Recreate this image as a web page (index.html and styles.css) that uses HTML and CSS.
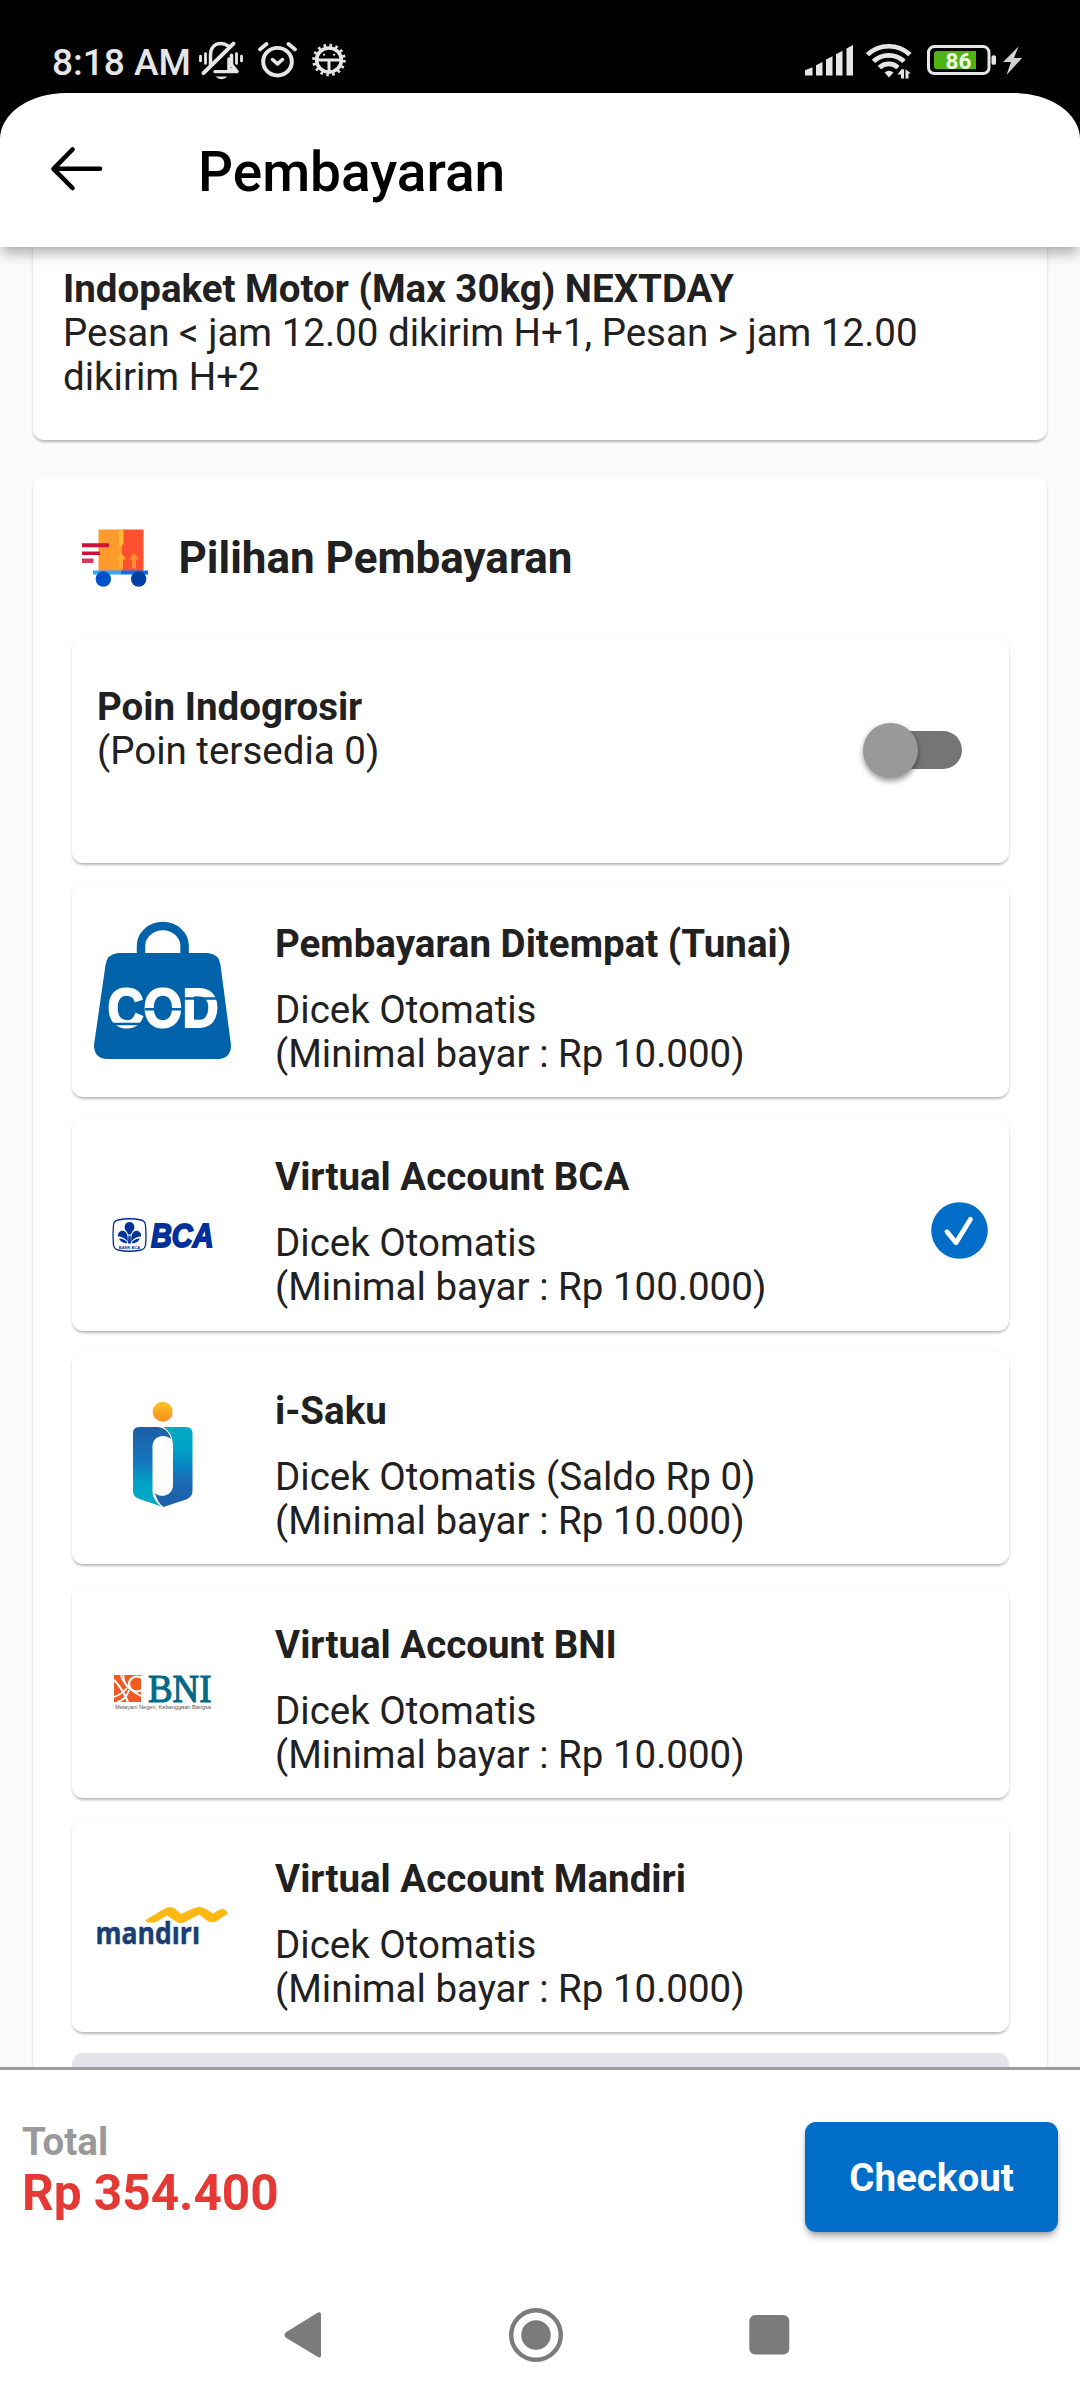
FILE: index.html
```
<!DOCTYPE html>
<html lang="id">
<head>
<meta charset="utf-8">
<title>Pembayaran</title>
<link rel="stylesheet" href="styles.css">
</head>
<body>
<div class="screen">
  <div class="status">
    <span class="clock">8:18 AM</span>
    <svg class="status-left" viewBox="196 38 160 48" fill="none" stroke="#e6e6e6" stroke-linecap="round" stroke-linejoin="round">
      <g transform="scale(1 .968)">
      <path d="M210.500 68V57C210.500 49 215 45 221 45c3 0 5 1 7 2.500" stroke-width="3.500"/>
      <path d="M203.500 75.500L233.500 45" stroke-width="4"/>
      <path d="M231.500 57v10l5.500 7h-22" stroke-width="3.500"/>
      <path d="M229 61v11h5" stroke-width="3.500"/>
      <path d="M215.500 79h12q-6 5.500-12 0z" fill="#e6e6e6" stroke="none"/>
      <path d="M200.500 58v5M205.500 55.500v10M236.500 55.500v10M241.500 58v5" stroke-width="2.800"/>
      <circle cx="277.500" cy="63.700" r="14.300" stroke-width="4"/>
      <path d="M272.500 61.500l5 4.500 5-4.500" stroke-width="3.600"/>
      <path d="M260 51l6.500-5.500M288.500 45.500L295 51" stroke-width="4"/>
      <circle cx="329" cy="62" r="15.300" stroke-width="3" stroke-dasharray="2.600 3.408" stroke-linecap="butt"/>
      <circle cx="329" cy="62" r="12.400" stroke-width="3.600"/>
      <path d="M317 62h24M329 62v13" stroke-width="3"/>
      <path d="M324 56.500h.1M334 56.500h.1" stroke-width="2.200"/>
      </g>
    </svg>
    <svg class="status-right" viewBox="800 38 226 48">
      <g transform="scale(1 .968)">
      <g fill="#e6e6e6">
        <path d="M805 78v-5.500l7.500-3V78zM816 78V67.500l6.500-3.500V78zM826 78V61.500l6.500-3.500V78zM836 78V56l6.500-3.500V78zM846.500 78V50l6.500-3.500V78z"/>
        <path d="M884.500 75q4.500-4 9 0l-4.500 5z"/>
        <path d="M897.500 77l4-5.500h2.500v9.500h-3v-4zM905.500 71.500l5.500 4.500h-2.500v5h-3z"/>
        <rect x="991.500" y="57" width="4.500" height="10" rx="2"/>
      </g>
      <path d="M1018.500 48L1003 64h8l-4.500 13.500L1022 60h-8z" fill="#d2d2d2"/>
      <g fill="none" stroke="#e6e6e6" stroke-width="4.800">
        <path d="M867.500 56.500a30 30 0 0 1 42.400 0M873.500 63.500a21.500 21.500 0 0 1 30.500 0M879.500 69.800a13 13 0 0 1 18.500 0"/>
        <rect x="928.500" y="48" width="60.500" height="28" rx="6" stroke-width="3"/>
      </g>
      <path d="M976 52.700h-39q-3 0-3 3v12.800q0 3 3 3h39z" fill="#4fb314"/>
      <text x="958.500" y="71" class="battery-text" text-anchor="middle">86</text>
      </g>
    </svg>
  </div>

  <header class="appbar">
    <svg class="back" viewBox="50 151 54 50" fill="none" stroke="#000" stroke-width="4.600" stroke-linecap="round" stroke-linejoin="round"><path d="M100 174.800H54M72.500 155.500L53.500 174.800l19 19.200"/></svg>
    <h1>Pembayaran</h1>
  </header>

  <main class="content">
    <section class="card shipping">
      <b>Indopaket Motor (Max 30kg) NEXTDAY</b>
      <p>Pesan &lt; jam 12.00 dikirim H+1, Pesan &gt; jam 12.00 dikirim H+2</p>
    </section>

    <section class="card payments">
      <div class="section-title">
        <svg class="truck" viewBox="82 526 66 64">
          <path d="M98.500 529.500H122v42H98.500z" fill="#ff9a2c"/>
          <path d="M122 529.500h21.500v42H122z" fill="#ff512f"/>
          <path d="M119 529.500h4.500v15l-4.500 3z" fill="#ffbb38"/>
          <path d="M121 552.500l-5 7h3v9h4v-9h3z" fill="#ffae35"/>
          <path d="M134 552.500l-5 7h3v9h4v-9h3z" fill="#ff8f2e"/>
          <path d="M82 543.300h27v4H82zM82 551.500h18v3.500H82z" fill="#cf1238"/>
          <path d="M82 558.500h11.500v4.500H82z" fill="#d83a5a"/>
          <path d="M93 570.500h29v4H93z" fill="#38a5ff"/>
          <path d="M121 570.500h27v4h-27z" fill="#0d6cff"/>
          <circle cx="103.300" cy="579" r="7.700" fill="#0052cc"/>
          <circle cx="138.700" cy="579" r="7.700" fill="#003fa3"/>
        </svg>
        <h2>Pilihan Pembayaran</h2>
      </div>

      <div class="card points">
        <div><b>Poin Indogrosir</b><p>(Poin tersedia 0)</p></div>
        <div class="switch"><i></i></div>
      </div>

      <div class="card option">
        <svg viewBox="72 885 180 212">
          <path d="M141 956v-10a21.800 20 0 0 1 43.600 0v10" fill="none" stroke="#0063a9" stroke-width="8.500"/>
          <path d="M118 953h90q11 1 12.500 12L231 1045q0 13-12 14H106q-12-1-12-14l11.500-80q1.500-11 12.500-12z" fill="#0063a9"/>
          <text x="107.500" y="1027" class="cod" textLength="111" lengthAdjust="spacingAndGlyphs">COD</text>
          <path d="M110 1024h30M145 1009.300h38M185 998.500h34" stroke="#0063a9" stroke-width="2.600"/>
        </svg>
        <div class="info"><b>Pembayaran Ditempat (Tunai)</b><p>Dicek Otomatis<br>(Minimal bayar : Rp 10.000)</p></div>
      </div>

      <div class="card option">
        <svg viewBox="72 1118.500 180 212" fill="#00309a">
          <path d="M118 1219.500q11.500-2.500 23 0 4 1 4.500 5 1 11.500 0 20-.5 4-4.500 5-11.500 2.500-23 0-4-1-4.500-5-1-10 0-20 .5-4 4.500-5z" fill="none" stroke="#00309a" stroke-width="1.300"/>
          <circle cx="129.500" cy="1226.500" r="4.900"/>
          <path d="M124.800 1228l4.700 8 4.700-8zM128.500 1234h2l.5 9h-3z"/>
          <path d="M118 1236c-1-5 5-8 8-4 2 3 2 6 1.500 9.500-1-3-5-5.500-9.500-5.500zM141 1236c1-5-5-8-8-4-2 3-2 6-1.500 9.500 1-3 5-5.500 9.500-5.500zM119 1238q6 0 8.500 4.500-5.500 1-8.500-4.500zM140 1238q-6 0-8.500 4.500 5.500 1 8.500-4.500z"/>
          <text x="129.500" y="1248" class="bca-small" text-anchor="middle">BANK BCA</text>
          <text x="151" y="1246.500" class="bca" textLength="62.500" lengthAdjust="spacingAndGlyphs">BCA</text>
        </svg>
        <div class="info"><b>Virtual Account BCA</b><p>Dicek Otomatis<br>(Minimal bayar : Rp 100.000)</p></div>
        <svg class="check" viewBox="931 1201.500 57 57"><circle cx="959.500" cy="1230" r="28.300" fill="#006ec8"/><path d="M947 1231.200l9 11 14.500-23.500" fill="none" stroke="#fff" stroke-width="4.800" stroke-linecap="round" stroke-linejoin="round"/></svg>
      </div>

      <div class="card option">
        <svg viewBox="72 1352.500 180 212">
          <defs>
            <linearGradient id="sun" x2="0" y2="1"><stop stop-color="#ffc425"/><stop offset="1" stop-color="#f68b1f"/></linearGradient>
            <linearGradient id="lt" x2="0" y2="1"><stop stop-color="#1f5da8"/><stop offset=".45" stop-color="#1478bf"/><stop offset=".7" stop-color="#00a3c7"/><stop offset="1" stop-color="#00a9c6"/></linearGradient>
            <linearGradient id="rt" x2="0" y2="1"><stop stop-color="#00a9c6"/><stop offset=".27" stop-color="#00a3c7"/><stop offset=".5" stop-color="#0783c1"/><stop offset=".68" stop-color="#1c6bb5"/><stop offset="1" stop-color="#1f5da8"/></linearGradient>
          </defs>
          <circle cx="162.700" cy="1412.300" r="10" fill="url(#sun)"/>
          <path d="M139 1427.500h18c7 0 12.500 5 14 12-7-6-18.500-3-18.500 8v44c0 6 3.500 11.500 9 15.500l-22-7.500q-6.500-2-6.500-8v-57.500q0-6.500 6-6.500z" fill="url(#lt)"/>
          <path d="M163 1427.500h23q6.500 0 6.500 6.500v57.500q0 6-6.500 8.500l-22.500 7.500c-4.500-3.500-7-8-8.500-14 6.500 6 18 2 18-8v-38c0-10-3-16-10-20z" fill="url(#rt)"/>
        </svg>
        <div class="info"><b>i-Saku</b><p>Dicek Otomatis (Saldo Rp 0)<br>(Minimal bayar : Rp 10.000)</p></div>
      </div>

      <div class="card option">
        <svg viewBox="72 1586 180 212">
          <path d="M114 1675h27v27h-27z" fill="#f15a23"/>
          <g fill="none" stroke="#fff"><path d="M121 1675q3 12 20 21" stroke-width="1.800"/><path d="M114 1680q8 8 14 22" stroke-width="2"/><path d="M114 1697q8-3 13-9M117 1702q9-2 12-12" stroke-width="1.800"/><ellipse cx="137" cy="1684" rx="8" ry="7.500" stroke-width="2.200"/><path d="M123.500 1675q0 12 10 16" stroke-width="1.500"/></g>
          <text x="148" y="1702" class="bni" textLength="63.500" lengthAdjust="spacingAndGlyphs">BNI</text>
          <text x="115" y="1709" class="bni-small" textLength="96" lengthAdjust="spacingAndGlyphs">Melayani Negeri, Kebanggaan Bangsa</text>
        </svg>
        <div class="info"><b>Virtual Account BNI</b><p>Dicek Otomatis<br>(Minimal bayar : Rp 10.000)</p></div>
      </div>

      <div class="card option">
        <svg viewBox="72 1820 180 212">
          <path d="M148 1918.500l15-9q6-3.500 11-1.500l7 6 12-5.500q7-3 12 0l8 5 7-4q5-2 8 4l-12 8q-5 2-9-1l-8-6-15 8q-4 2-8-1l-9-6-10 6q-7 3-12-1z" fill="#fdb813"/>
          <text x="95.500" y="1943.800" class="mandiri" textLength="104.500" lengthAdjust="spacingAndGlyphs">mandırı</text>
        </svg>
        <div class="info"><b>Virtual Account Mandiri</b><p>Dicek Otomatis<br>(Minimal bayar : Rp 10.000)</p></div>
      </div>

      <div class="card option disabled"></div>
    </section>
  </main>

  <footer class="checkout">
    <div><div class="label">Total</div><div class="amount">Rp 354.400</div></div>
    <button>Checkout</button>
  </footer>

  <svg class="nav" viewBox="0 2270 1080 130" fill="#7b7b7b">
    <path d="M285.500 2332.500q-2 2.500 0 5l32.500 19.500q3 1.500 3-1.500v-41q0-3-3-2z"/>
    <circle cx="536" cy="2335" r="24.800" fill="none" stroke="#7b7b7b" stroke-width="4.400"/>
    <circle cx="536" cy="2335" r="14.800"/>
    <rect x="749.300" y="2315" width="40" height="39.500" rx="6"/>
  </svg>
</div>
</body>
</html>
```
FILE: styles.css
```
* { box-sizing: border-box; }
body { margin: 0; background: #000; font-family: Roboto, sans-serif; }
h1, h2, p { margin: 0; }
svg { display: block; flex: none; }

.screen {
  display: flex;
  flex-direction: column;
  width: 1080px;
  height: 2400px;
  overflow: hidden;
  color: #212121;
  font-size: 38.5px;
  line-height: 44px;
}

.status {
  flex: none;
  display: flex;
  align-items: flex-start;
  height: 93px;
  padding: 38px 54px 0 52px;
}
.clock { width: 144px; margin-top: 3px; color: #e6e6e6; font-size: 37px; font-weight: 500; white-space: nowrap; }
.status-left { width: 160px; height: 48px; }
.status-right { width: 226px; height: 48px; margin-left: auto; }
.battery-text { font: 700 22.5px Roboto, sans-serif; fill: #f2fbe9; }

.appbar {
  position: relative;
  z-index: 1;
  flex: none;
  display: flex;
  align-items: center;
  height: 154px;
  padding-left: 50px;
  background: #fff;
  border-radius: 66px 66px 0 0 / 46px 46px 0 0;
  box-shadow: 0 8px 14px -2px rgba(0, 0, 0, .32);
}
.back { width: 54px; height: 50px; }
.appbar h1 { margin: 4px 0 0 94px; color: #000; font-size: 55px; font-weight: 500; line-height: 64px; }

.content {
  flex: none;
  height: 1820px;
  padding: 0 33px;
  background: #fafafa;
  overflow: hidden;
}
.card {
  background: #fff;
  border-radius: 11px;
  box-shadow: 0 3px 3px -1px rgba(0, 0, 0, .22), 0 1px 3px rgba(0, 0, 0, .12);
}
.shipping { height: 192.5px; padding: 20px 30px; border-radius: 0 0 11px 11px; }
b { display: block; font-weight: 700; }

.payments { height: 1900px; margin-top: 36px; padding: 49px 38.5px 0 39px; }
.section-title { display: flex; align-items: center; height: 113.2px; padding: 0 0 46px 10px; }
.truck { width: 66px; height: 64px; }
.section-title h2 { margin-left: 30.5px; font-size: 44px; font-weight: 700; line-height: 50px; }

.points {
  display: flex;
  justify-content: space-between;
  height: 225.5px;
  padding: 47px 46.5px 0 25px;
}
.switch { width: 91px; height: 38.5px; margin-top: 46px; border-radius: 20px; background: #757575; }
.switch i {
  display: block;
  width: 55px;
  height: 55px;
  margin: -8px 0 0 -8px;
  border-radius: 50%;
  background: #999;
  box-shadow: 0 4px 5px rgba(0, 0, 0, .28), 0 1px 6px rgba(0, 0, 0, .16);
}

.option { display: flex; align-items: center; height: 212.25px; margin-top: 21.5px; }
.option > svg:first-child { width: 180px; height: 212px; }
.info { align-self: flex-start; padding: 37px 0 0 23px; }
.info p { margin-top: 22px; }
.check { width: 57px; height: 57px; margin: 11px 20.5px 0 auto; }
.disabled { background: #e4e4ea; box-shadow: none; }

.cod { font: 700 55px "Liberation Sans", sans-serif; fill: #fff; stroke: #fff; stroke-width: 2px; }
.bca { font: italic 700 33px "Liberation Sans", sans-serif; stroke: #00309a; stroke-width: 1.8px; }
.bca-small { font: 700 4px "Liberation Sans", sans-serif; }
.bni { font: 400 40.5px "Liberation Serif", serif; fill: #006a87; stroke: #006a87; stroke-width: 1.2px; }
.bni-small { font: 400 6px "Liberation Sans", sans-serif; fill: #555; }
.mandiri { font: 700 30px "Open Sans", sans-serif; fill: #183e74; stroke: #183e74; stroke-width: .5px; }

.checkout {
  flex: none;
  display: flex;
  align-items: flex-start;
  justify-content: space-between;
  height: 203px;
  padding: 52px 22px 0;
  background: #fff;
  border-top: 3px solid #9e9e9e;
}
.label { margin-top: -2px; color: #999; font-weight: 700; }
.amount { color: #e53935; font-size: 49.5px; font-weight: 700; line-height: 58px; }
.checkout button {
  width: 253px;
  height: 110px;
  padding: 0;
  border: 0;
  border-radius: 11px;
  background: #006ec8;
  color: #fff;
  font: 700 38.5px Roboto, sans-serif;
  box-shadow: 0 6px 8px -2px rgba(0, 0, 0, .3), 0 2px 4px rgba(0, 0, 0, .14);
}

.nav { width: 1080px; height: 130px; background: #fff; }
```
